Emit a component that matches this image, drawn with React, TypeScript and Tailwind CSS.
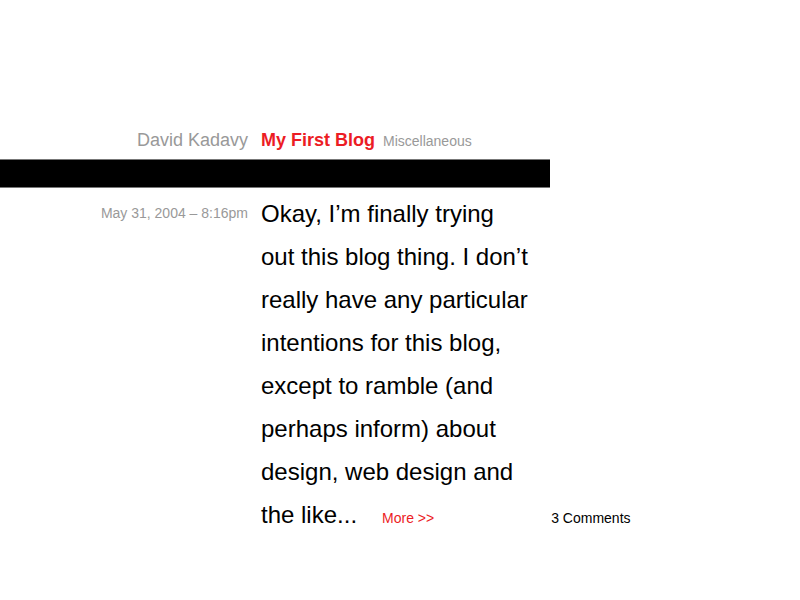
import React from 'react';

const lines = [
  'Okay, I\u2019m finally trying',
  'out this blog thing. I don\u2019t',
  'really have any particular',
  'intentions for this blog,',
  'except to ramble (and',
  'perhaps inform) about',
  'design, web design and',
];

export default function App() {
  return (
    <div className="min-h-screen w-[800px] bg-white pt-[130px] font-['Liberation_Sans',Arial,sans-serif]">
      {/* header */}
      <div className="flex items-baseline leading-[20px]">
        <div className="w-[248px] text-right text-[18px] text-[#999999]">David Kadavy</div>
        <h1 className="ml-[13px] text-[18px] font-bold text-[#ec1c24]">My First Blog</h1>
        <span className="ml-[8px] text-[14px] text-[#999999]">Miscellaneous</span>
      </div>

      <div className="mt-[8px] h-[29px] w-[550px] border-y border-[#777777] bg-black" />

      {/* post */}
      <div className="mt-[4px] flex">
        <div className="w-[248px] text-right text-[14px] leading-[43px] text-[#999999]">
          May 31, 2004 &ndash; 8:16pm
        </div>
        <div className="ml-[13px] text-[24px] leading-[43px] text-black">
          {lines.map((line) => (
            <div key={line}>{line}</div>
          ))}
          <div className="flex items-baseline">
            <span>the like...</span>
            <a href="#" className="ml-[25px] text-[14px] text-[#ec1c24]">More &gt;&gt;</a>
            <a href="#" className="ml-[117px] text-[14px] text-black">3 Comments</a>
          </div>
        </div>
      </div>
    </div>
  );
}
